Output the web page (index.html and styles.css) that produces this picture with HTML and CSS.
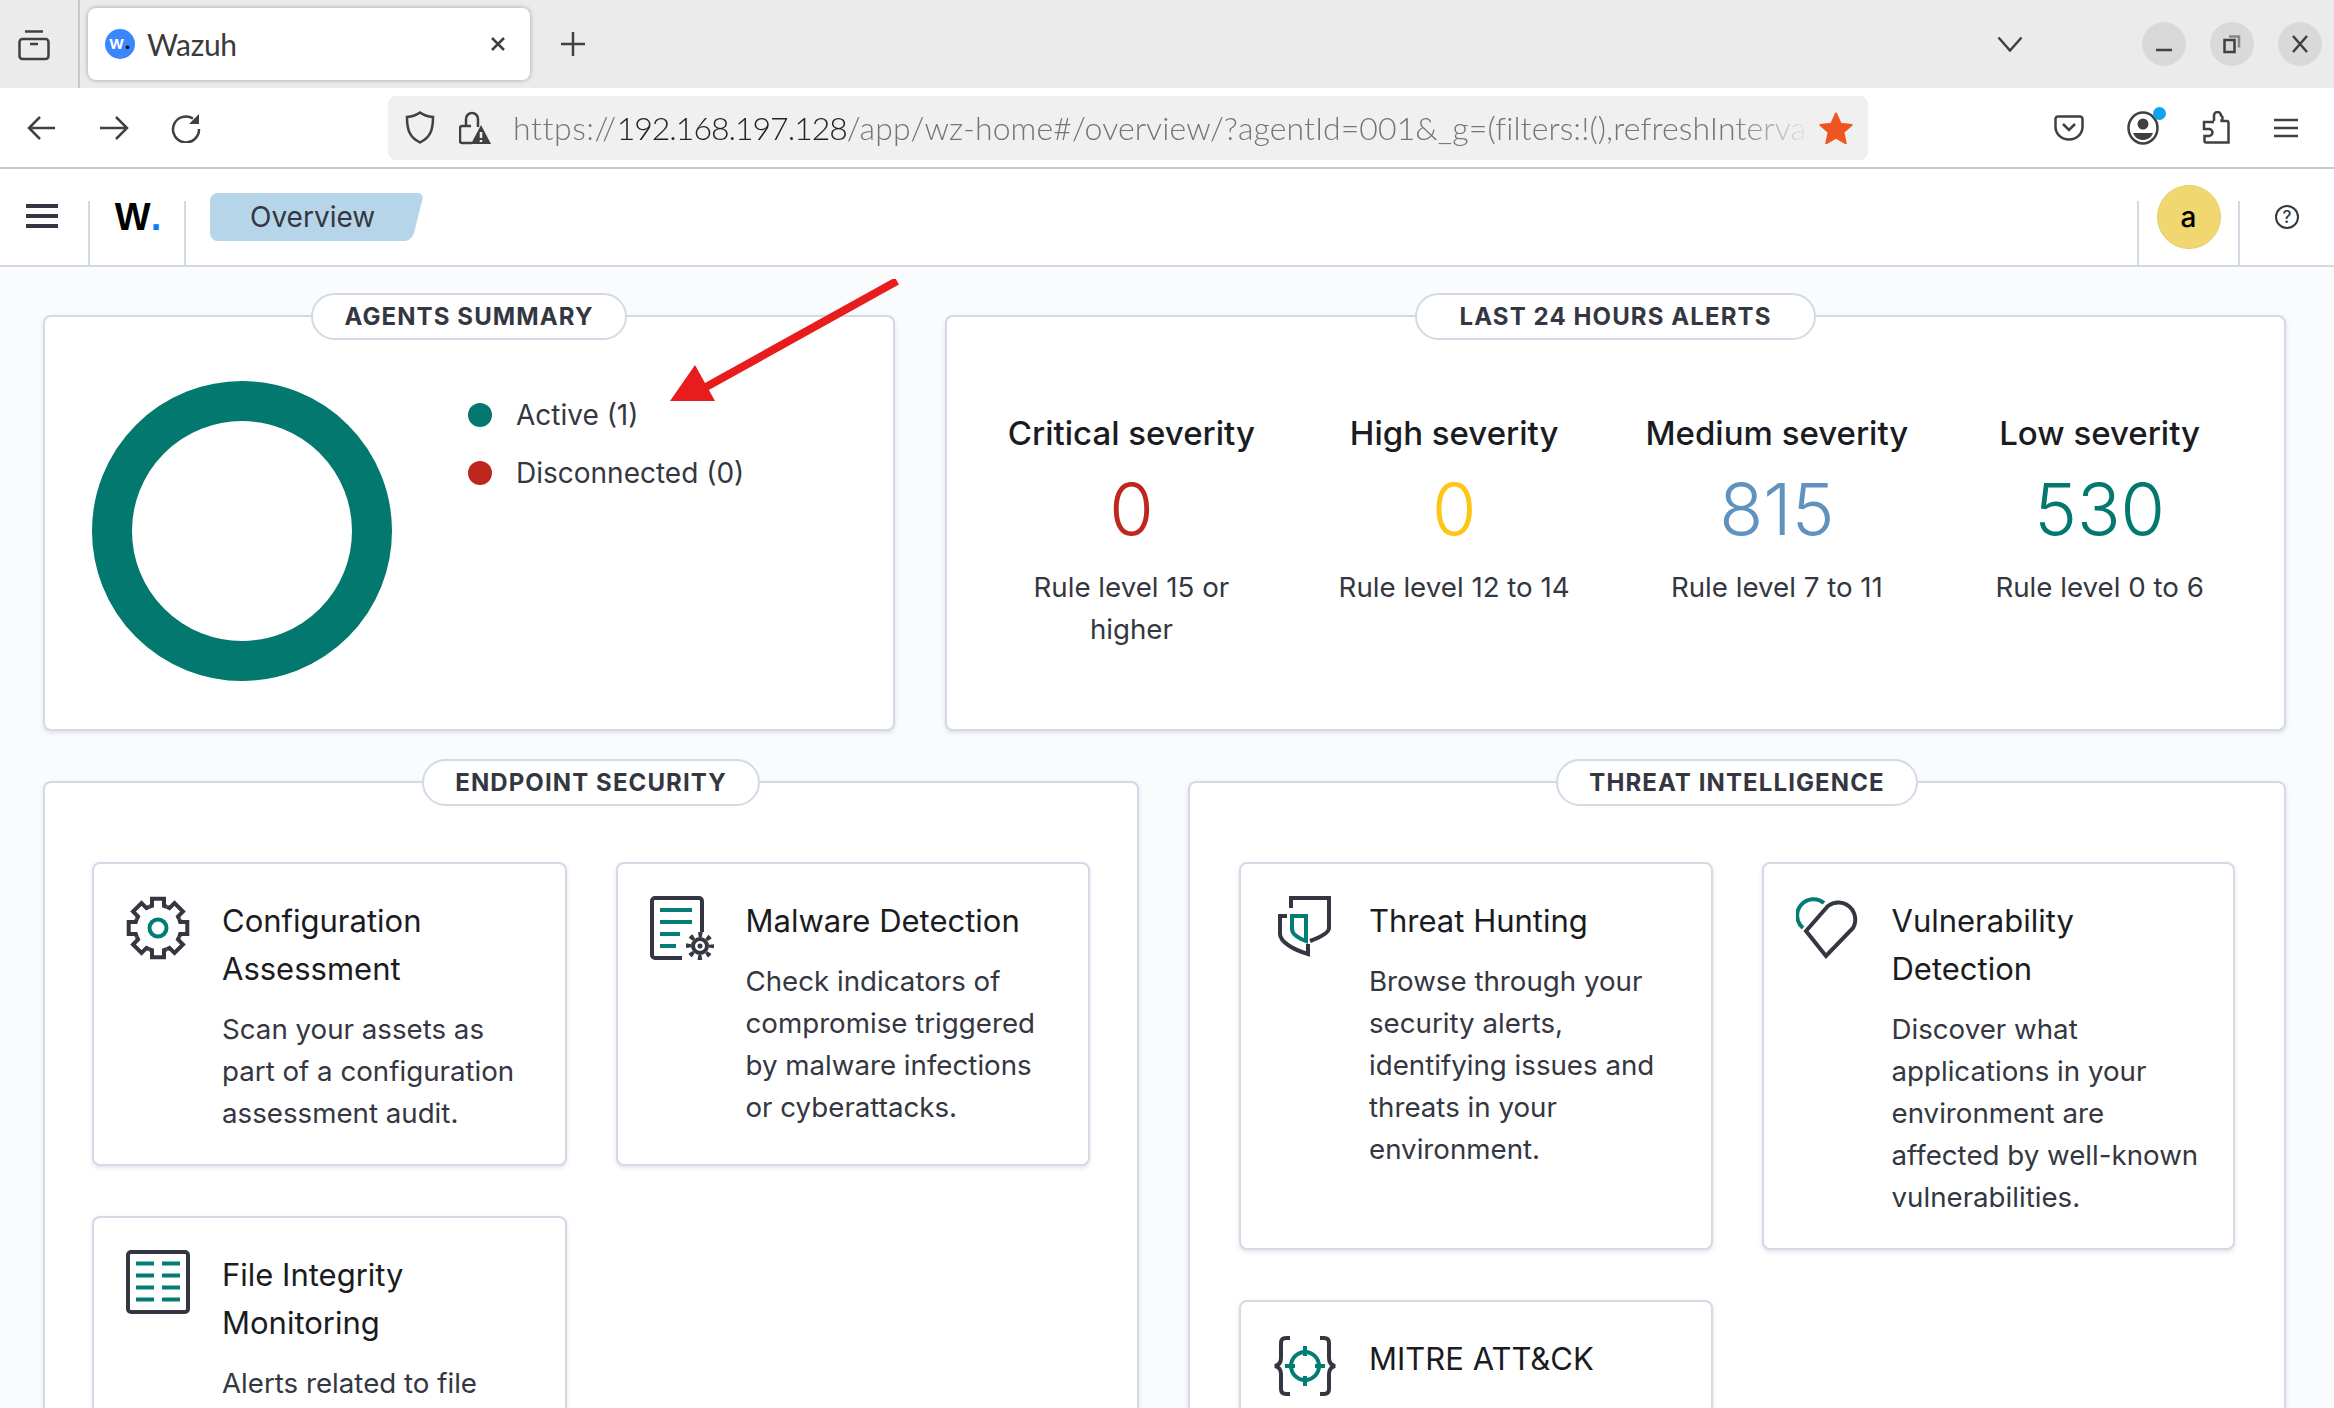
FILE: index.html
```html
<!DOCTYPE html>
<html lang="en">

<head>
    <meta charset="UTF-8">
    <meta name="viewport" content="width=device-width, initial-scale=1.0">
    <title>Wazuh</title>
    <link rel="stylesheet" href="styles.css">
</head>

<body>
    <div class="tabbar">
        <div class="tabbar-view">
            <svg width="32" height="32" viewBox="0 0 32 32" class="ico"><path d="M7 2.5h18"/><rect x="1.5" y="10" width="29" height="20" rx="3"/><path d="M12 15h8"/></svg>
        </div>
        <div class="tab">
            <span class="favicon">w<b>.</b></span>
            <span class="tab-title">Wazuh</span>
            <svg width="18" height="18" viewBox="0 0 18 18" class="ico"><path d="M3 3l12 12M15 3L3 15"/></svg>
        </div>
        <svg width="26" height="26" viewBox="0 0 26 26" class="ico newtab"><path d="M13 1v24M1 13h24"/></svg>
        <div class="tabbar-right">
            <svg width="26" height="16" viewBox="0 0 26 16" class="ico chevron"><path d="M1.500 1.500L13 14.500L24.500 1.500"/></svg>
            <span class="winbtn"><svg width="18" height="18" viewBox="0 0 18 18" class="ico"><path d="M1 15h16"/></svg></span>
            <span class="winbtn"><svg width="18" height="20" viewBox="0 0 18 20" class="ico thin"><rect x="1.500" y="6" width="10" height="12"/><path d="M6 2.500h10v11" stroke="#888"/></svg></span>
            <span class="winbtn"><svg width="20" height="20" viewBox="0 0 20 20" class="ico"><path d="M3 2l14 16M17 2L3 18"/></svg></span>
        </div>
    </div>

    <div class="toolbar">
        <div class="nav-btns">
            <svg width="30" height="26" viewBox="0 0 30 26" class="ico"><path d="M28 13H3M13 2L2 13l11 11"/></svg>
            <svg width="30" height="26" viewBox="0 0 30 26" class="ico"><path d="M1 13h25M17 2l11 11-11 11"/></svg>
            <svg width="30" height="30" viewBox="0 0 30 30" class="ico reload"><path d="M22 5.500A13 13 0 1 0 28 16"/><path d="M28 1v10H18z" class="solid"/></svg>
        </div>
        <div class="urlbar">
            <svg width="30" height="33" viewBox="0 0 30 33" class="ico"><path d="M15 1.500c4 3 8 4 13 4.500 0 12-2 20-13 25.500C4 26 2 18 2 6c5-.5 9-1.500 13-4.500z"/></svg>
            <svg width="32" height="34" viewBox="0 0 32 34" class="ico lock"><path d="M7 15V8a6 6 0 0 1 12 0v8M13 32H3a2 2 0 0 1-2-2V17a2 2 0 0 1 2-2h9"/><path d="M22 14l10 19H12z" class="solid"/><path d="M22 21v6M22 29v2" class="cutout"/></svg>
            <div class="url"><span class="url-scheme">https://</span><span class="url-host">192.168.197.128</span><span class="url-path">/app/wz-home#/overview/?agentId=001&amp;_g=(filters:!(),refreshInterva</span></div>
            <svg width="34" height="32" viewBox="0 0 34 32" class="star"><path d="M17 1.500l4.600 10.200 11 1.200-8.200 7.400 2.300 10.900L17 25.600 7.300 31.200l2.300-10.900L1.400 12.900l11-1.200z"/></svg>
        </div>
        <div class="tool-btns">
            <svg width="30" height="26" viewBox="0 0 30 26" class="ico"><path d="M4 1.500h22a2.500 2.500 0 0 1 2.500 2.500v8a13.500 12.500 0 0 1-27 0V4A2.500 2.500 0 0 1 4 1.500z"/><path d="M9 9l6 6 6-6"/></svg>
            <span class="account">
                <svg width="32" height="34" viewBox="0 0 32 34" class="ico"><ellipse cx="16" cy="17" rx="14.500" ry="15.500"/><circle cx="16" cy="13" r="5.500" class="solid"/><path d="M6 22h20c-2 5-6 7-10 7s-8-2-10-7z" class="solid"/></svg>
                <i class="account-dot"></i>
            </span>
            <svg width="28" height="33" viewBox="0 0 28 33" class="ico"><path d="M12 10V4.500a3.500 3.500 0 0 1 7 0 3 3 0 0 1-.5 5.500H25a1.500 1.500 0 0 1 1.500 1.500V31.500H4a1.500 1.500 0 0 1-1.500-1.500v-5H7a3.500 3.500 0 0 0 0-7H2v-7h10"/></svg>
            <svg width="26" height="20" viewBox="0 0 26 20" class="ico"><path d="M1 2h24M1 10h24M1 18h24"/></svg>
        </div>
    </div>

    <header class="appbar">
        <div class="appbar-cell appbar-menu">
            <span class="burger"><i></i><i></i><i></i></span>
        </div>
        <div class="appbar-cell appbar-logo"><span class="logo">W<b>.</b></span></div>
        <div class="crumb">Overview</div>
        <div class="appbar-cell appbar-user"><span class="avatar">a</span></div>
        <div class="appbar-cell appbar-help"><span class="help">?</span></div>
    </header>

    <main class="page">
        <div class="row row-top">
            <section class="panel">
                <h2 class="panel-title"><span>AGENTS SUMMARY</span></h2>
                <div class="summary">
                    <div class="donut"></div>
                    <ul class="legend">
                        <li><i class="dot dot-active"></i>Active (1)</li>
                        <li><i class="dot dot-off"></i>Disconnected (0)</li>
                    </ul>
                </div>
            </section>
            <section class="panel">
                <h2 class="panel-title panel-title-wide"><span>LAST 24 HOURS ALERTS</span></h2>
                <div class="stats">
                    <div class="stat">
                        <h3>Critical severity</h3>
                        <div class="stat-num c-critical">0</div>
                        <p>Rule level 15 or higher</p>
                    </div>
                    <div class="stat">
                        <h3>High severity</h3>
                        <div class="stat-num c-high">0</div>
                        <p>Rule level 12 to 14</p>
                    </div>
                    <div class="stat">
                        <h3>Medium severity</h3>
                        <div class="stat-num c-medium">815</div>
                        <p>Rule level 7 to 11</p>
                    </div>
                    <div class="stat">
                        <h3>Low severity</h3>
                        <div class="stat-num c-low">530</div>
                        <p>Rule level 0 to 6</p>
                    </div>
                </div>
            </section>
        </div>

        <div class="row row-bottom">
            <section class="panel">
                <h2 class="panel-title"><span>ENDPOINT SECURITY</span></h2>
                <div class="cards">
                    <article class="card">
                        <svg width="64" height="64" viewBox="0 0 64 64" class="card-ico">
                            <g class="dark">
                                <path id="tooth" d="M23.200 10.750L26 9.800V2.700H38V9.800L40.800 10.750"/>
                                <use href="#tooth" transform="rotate(45 32 32)"/>
                                <use href="#tooth" transform="rotate(90 32 32)"/>
                                <use href="#tooth" transform="rotate(135 32 32)"/>
                                <use href="#tooth" transform="rotate(180 32 32)"/>
                                <use href="#tooth" transform="rotate(225 32 32)"/>
                                <use href="#tooth" transform="rotate(270 32 32)"/>
                                <use href="#tooth" transform="rotate(315 32 32)"/>
                            </g>
                            <circle cx="32" cy="32" r="8.500" class="teal"/>
                        </svg>
                        <div>
                            <h3>Configuration Assessment</h3>
                            <p>Scan your assets as part of a configuration assessment audit.</p>
                        </div>
                    </article>
                    <article class="card">
                        <svg width="64" height="64" viewBox="0 0 64 64" class="card-ico">
                            <path d="M32 62H5a3 3 0 0 1-3-3V5a3 3 0 0 1 3-3h44a3 3 0 0 1 3 3v31" class="dark"/>
                            <path d="M10 14h32M10 26h32M10 38h20M10 50h16" class="teal"/>
                            <circle cx="50" cy="50" r="7" class="dark"/>
                            <circle cx="50" cy="50" r="11.500" class="gear-teeth"/>
                            <circle cx="50" cy="50" r="2.500" class="fill-dark"/>
                        </svg>
                        <div>
                            <h3>Malware Detection</h3>
                            <p>Check indicators of compromise triggered by malware infections or cyberattacks.</p>
                        </div>
                    </article>
                    <article class="card">
                        <svg width="64" height="64" viewBox="0 0 64 64" class="card-ico">
                            <rect x="2" y="2" width="60" height="60" rx="3" class="dark"/>
                            <path d="M10 13.500h18M36 13.500h18M10 25.500h18M36 25.500h18M10 37.500h18M36 37.500h18M10 49.500h18M36 49.500h18" class="teal"/>
                        </svg>
                        <div>
                            <h3>File Integrity Monitoring</h3>
                            <p>Alerts related to file</p>
                        </div>
                    </article>
                </div>
            </section>
            <section class="panel panel-threat">
                <h2 class="panel-title"><span>THREAT INTELLIGENCE</span></h2>
                <div class="cards">
                    <article class="card">
                        <svg width="64" height="64" viewBox="0 0 64 64" class="card-ico">
                            <path d="M18 12V2h38v30c0 5-8 9-19 13" class="dark"/>
                            <path d="M14 20H7v18c0 8 14 16 28 20V48" class="dark"/>
                            <path d="M19 20h14v25c-8-3-14-7-14-12z" class="teal"/>
                        </svg>
                        <div>
                            <h3>Threat Hunting</h3>
                            <p>Browse through your security alerts, identifying issues and threats in your environment.</p>
                        </div>
                    </article>
                    <article class="card">
                        <svg width="64" height="64" viewBox="0 0 64 64" class="card-ico">
                            <path d="M10 35L32 10A17 17 0 0 1 57 32L30 60Z" class="dark"/>
                            <path d="M7 32A15.500 15.500 0 0 1 28 7" class="teal"/>
                        </svg>
                        <div>
                            <h3>Vulnerability Detection</h3>
                            <p>Discover what applications in your environment are affected by well-known vulnerabilities.</p>
                        </div>
                    </article>
                    <article class="card">
                        <svg width="64" height="64" viewBox="0 0 64 64" class="card-ico">
                            <path d="M17 4h-4c-4 0-5 2-5 5v15c0 4-2 7-6 8 4 1 6 4 6 8v15c0 3 1 5 5 5h4" class="dark"/>
                            <path d="M47 4h4c4 0 5 2 5 5v15c0 4 2 7 6 8-4 1-6 4-6 8v15c0 3-1 5-5 5h-4" class="dark"/>
                            <circle cx="32" cy="32" r="14" class="teal"/>
                            <path d="M32 12v10M32 42v10M12 32h10M42 32h10" class="teal"/>
                        </svg>
                        <div>
                            <h3>MITRE ATT&amp;CK</h3>
                            <p>Security events</p>
                        </div>
                    </article>
                </div>
            </section>
        </div>
    </main>

    <!-- red annotation over the page -->
    <svg class="arrow" width="240" height="130" viewBox="0 0 240 130">
        <path d="M229 2L38 108" class="arrow-line"/>
        <path d="M2 122L47 122L27 86Z" class="arrow-head"/>
    </svg>
</body>

</html>
```

FILE: styles.css
```css
* {
    box-sizing: border-box;
}

html, body {
    margin: 0;
    height: 1408px;
    overflow: hidden;
}

body {
    font-family: Inter, "Liberation Sans", sans-serif;
    color: #343741;
    background-color: #fafbfd;
    position: relative;
}

h2, h3, p, ul {
    margin: 0;
    padding: 0;
}

/* browser chrome */
.ico {
    fill: none;
    stroke: #404040;
    stroke-width: 2.5;
    flex: none;
}

.ico.thin {
    stroke-width: 2.5;
}

.ico .solid {
    fill: #404040;
    stroke: none;
}

.ico .cutout {
    stroke: #f0f0f0;
    stroke-width: 2.5;
}

.tabbar {
    height: 88px;
    background-color: #ebebeb;
    display: flex;
    align-items: center;
}

.tabbar-view {
    width: 80px;
    height: 88px;
    border-right: 2px solid #c8c8c8;
    padding: 29px 0 0 18px;
}

.tab {
    width: 442px;
    height: 72px;
    margin-left: 8px;
    background-color: #fff;
    border-radius: 8px;
    box-shadow: 0 0 5px rgba(0, 0, 0, 0.3);
    display: flex;
    align-items: center;
    padding: 0 23px 0 17px;
}

.favicon {
    width: 30px;
    height: 30px;
    border-radius: 50%;
    background-color: #3a86ff;
    color: #fff;
    font-size: 18px;
    font-weight: 600;
    line-height: 27px;
    text-align: center;
}

.favicon b {
    color: #111;
}

.tab-title {
    flex: 1;
    margin-left: 12px;
    font-family: Lato, sans-serif;
    font-size: 30px;
    letter-spacing: -0.3px;
    color: #3a3a3a;
}

.newtab {
    margin-left: 30px;
}

.tabbar-right {
    margin-left: auto;
    display: flex;
    align-items: center;
    padding-right: 12px;
}

.chevron {
    margin-right: 95px;
}

.winbtn {
    width: 44px;
    height: 44px;
    margin-left: 24px;
    border-radius: 50%;
    background-color: #d9d9d9;
    display: flex;
    align-items: center;
    justify-content: center;
}

.toolbar {
    height: 81px;
    background-color: #fff;
    border-bottom: 2px solid #c8c8c8;
    display: flex;
    align-items: center;
}

.nav-btns {
    width: 388px;
    padding-left: 27px;
    display: flex;
    align-items: center;
    gap: 42px;
}

.urlbar {
    width: 1480px;
    height: 64px;
    background-color: #f0f0f0;
    border-radius: 8px;
    display: flex;
    align-items: center;
    padding: 0 15px 0 17px;
}

.lock {
    margin-left: 24px;
}

.url {
    width: 1300px;
    margin-left: 22px;
    font-family: Lato, sans-serif;
    font-size: 32px;
    font-weight: 300;
    white-space: nowrap;
    font-variant-ligatures: none;
    overflow: hidden;
    -webkit-mask-image: linear-gradient(to right, #000 94%, transparent);
    mask-image: linear-gradient(to right, #000 94%, transparent);
}

.url-scheme {
    color: #757575;
    letter-spacing: 0.55px;
}

.url-host {
    color: #222;
    letter-spacing: -1px;
}

.url-path {
    color: #757575;
    letter-spacing: 0.1px;
}

.star {
    margin-left: auto;
    fill: #ee5520;
    stroke: #ee5520;
    stroke-width: 2;
    stroke-linejoin: round;
    flex: none;
}

.tool-btns {
    flex: 1;
    display: flex;
    align-items: center;
    justify-content: flex-end;
    gap: 43px;
    padding-right: 35px;
}

.account {
    position: relative;
    display: flex;
}

.account-dot {
    position: absolute;
    top: -4px;
    right: -7px;
    width: 13px;
    height: 13px;
    border-radius: 50%;
    background-color: #0ea5ee;
}

/* wazuh top bar */
.appbar {
    height: 98px;
    background-color: #fff;
    border-bottom: 2px solid #d3dae6;
    display: flex;
    align-items: flex-end;
}

.appbar-cell {
    height: 64px;
    display: flex;
    justify-content: center;
}

.appbar-menu {
    width: 90px;
    padding-right: 5px;
    border-right: 2px solid #d3dae6;
}

.burger {
    width: 32px;
    height: 24px;
    margin-top: 3px;
    display: flex;
    flex-direction: column;
    justify-content: space-between;
}

.burger i {
    height: 4px;
    background-color: #343741;
}

.appbar-logo {
    width: 96px;
    padding-left: 2px;
    border-right: 2px solid #d3dae6;
}

.logo {
    font-family: "Liberation Sans", sans-serif;
    font-size: 38px;
    font-weight: 700;
    line-height: 38px;
    color: #000;
    margin-top: -3px;
}

.logo b {
    color: #0a7cff;
}

.crumb {
    align-self: flex-start;
    position: relative;
    width: 196px;
    height: 48px;
    margin: 24px 0 0 24px;
    padding-left: 40px;
    background-color: #b7d5e9;
    border-radius: 8px 0 0 8px;
    font-size: 28px;
    line-height: 48px;
    color: #343741;
    z-index: 0;
}

.crumb::after {
    content: "";
    position: absolute;
    top: 0;
    right: -12px;
    width: 40px;
    height: 48px;
    background-color: #b7d5e9;
    border-radius: 0 6px 8px 0;
    transform: skewX(-14deg);
    z-index: -1;
}

.appbar-user {
    width: 103px;
    margin-left: auto;
    border-left: 2px solid #d3dae6;
    border-right: 2px solid #d3dae6;
}

.avatar {
    width: 64px;
    height: 64px;
    margin-top: -16px;
    border-radius: 50%;
    background-color: #f0d76f;
    border: 1px solid #e6cd66;
    color: #000;
    font-size: 28px;
    font-weight: 500;
    line-height: 62px;
    text-align: center;
}

.appbar-help {
    width: 94px;
}

.help {
    width: 24px;
    height: 24px;
    margin-top: 4px;
    border: 2px solid #343741;
    border-radius: 50%;
    font-size: 17px;
    font-weight: 500;
    line-height: 20px;
    text-align: center;
}

/* panels */
.page {
    padding: 48px 48px 0 43px;
}

.row {
    display: grid;
    column-gap: 50px;
}

.row-top {
    grid-template-columns: 852px 1fr;
    height: 416px;
    margin-bottom: 50px;
}

.row-bottom {
    grid-template-columns: 1096px 1fr;
    column-gap: 49px;
}

.panel {
    background-color: #fff;
    border: 2px solid #d3dae6;
    border-radius: 8px;
    box-shadow: 0 2px 4px rgba(152, 162, 179, 0.3);
    padding: 0 47px;
}

.panel-threat {
    padding: 0 49px;
}

.panel-title {
    display: flex;
    justify-content: center;
    margin-top: -24px;
}

.panel-title span {
    height: 47px;
    padding: 0 31px;
    background-color: #fff;
    border: 2px solid #d3dae6;
    border-radius: 24px;
    font-size: 24px;
    font-weight: 700;
    letter-spacing: 1.1px;
    line-height: 44px;
    color: #343741;
}

.panel-title-wide span {
    padding: 0 43px;
}

.summary {
    display: flex;
    margin-top: 41px;
}

.donut {
    width: 300px;
    height: 300px;
    border: 40px solid #03786e;
    border-radius: 50%;
}

.legend {
    list-style: none;
    margin: 13px 0 0 76px;
    font-size: 28px;
    line-height: 42px;
}

.legend li {
    display: flex;
    align-items: center;
    margin-bottom: 16px;
}

.dot {
    width: 24px;
    height: 24px;
    margin-right: 24px;
    border-radius: 50%;
}

.dot-active {
    background-color: #03786e;
}

.dot-off {
    background-color: #bd271e;
}

.stats {
    display: grid;
    grid-template-columns: repeat(4, 1fr);
    margin: 69px -24px 0;
    text-align: center;
}

.stat {
    padding: 0 24px;
}

.stat h3 {
    font-size: 33px;
    font-weight: 500;
    line-height: 48px;
    color: #1a1c21;
}

.stat-num {
    font-size: 72px;
    font-weight: 300;
    line-height: 84px;
    margin: 10px 0 15px;
}

.stat p {
    font-size: 27.7px;
    line-height: 42px;
}

.c-critical {
    color: #bd271e;
}

.c-high {
    color: #fec514;
}

.c-medium {
    color: #6092c0;
}

.c-low {
    color: #03786e;
}

/* cards */
.cards {
    display: grid;
    grid-template-columns: 1fr 1fr;
    gap: 50px 49px;
    margin: 56px 0 32px;
}

.card {
    display: flex;
    gap: 32px;
    background-color: #fff;
    border: 2px solid #d3dae6;
    border-radius: 8px;
    box-shadow: 0 2px 4px rgba(152, 162, 179, 0.3);
    padding: 32px 32px 30px;
}

.card h3 {
    font-size: 31px;
    font-weight: 400;
    line-height: 48px;
    color: #1a1c21;
    margin-top: 1px;
    margin-bottom: 15px;
}

.card p {
    font-size: 27.7px;
    line-height: 42px;
}

.card-ico {
    flex: none;
}

.card-ico .dark {
    fill: none;
    stroke: #343741;
    stroke-width: 4;
}

.card-ico .teal {
    fill: none;
    stroke: #017d73;
    stroke-width: 4;
}

.card-ico .fill-dark {
    fill: #343741;
}

.card-ico .gear-teeth {
    fill: none;
    stroke: #343741;
    stroke-width: 5;
    stroke-dasharray: 4 5.030;
    stroke-dashoffset: 2;
}

/* annotation */
.arrow {
    position: absolute;
    left: 668px;
    top: 279px;
}

.arrow-line {
    stroke: #e81c1c;
    stroke-width: 8;
    fill: none;
}

.arrow-head {
    fill: #e81c1c;
}
```
